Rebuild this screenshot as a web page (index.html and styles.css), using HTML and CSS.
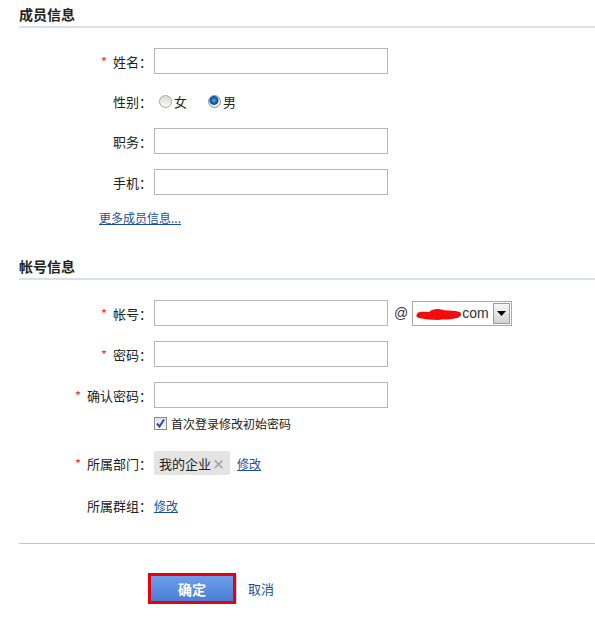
FILE: index.html
```html
<!DOCTYPE html>
<html lang="zh-CN">
<head>
    <meta charset="UTF-8">
    <meta name="viewport" content="width=device-width, initial-scale=1.0">
    <title>添加成员</title>
    <link rel="stylesheet" href="styles.css">
</head>
<body>

    <div class="page">
        <h2 class="section-title">成员信息</h2>
        <div class="fields">
            <div class="row">
                <label class="label"><span class="req">*</span>姓名：</label>
                <input class="text" type="text">
            </div>
            <div class="row row-radio">
                <label class="label">性别：</label>
                <label class="opt"><input class="radio" type="radio" name="sex">女</label>
                <label class="opt"><input class="radio" type="radio" name="sex" checked>男</label>
            </div>
            <div class="row">
                <label class="label">职务：</label>
                <input class="text" type="text">
            </div>
            <div class="row">
                <label class="label">手机：</label>
                <input class="text" type="text">
            </div>
            <a class="more" href="#">更多成员信息...</a>
        </div>

        <h2 class="section-title second">帐号信息</h2>
        <div class="fields">
            <div class="row">
                <label class="label"><span class="req">*</span>帐号：</label>
                <input class="text" type="text">
                <span class="at">@</span>
                <div class="domain">
                    <svg class="blot" width="46" height="14" viewBox="0 0 46 14">
                        <path d="M1 7 C2 4 8 5 13 5 C16 2 22 1 27 3 C32 4 38 3 44 5 C46 7 45 10 41 11 C35 13 28 12 22 13 C15 13 8 12 3 11 C0 10 0 9 1 7 Z" fill="#f20d0d"/>
                    </svg>
                    <span class="domain-text">com</span>
                    <span class="drop">
                        <svg width="9" height="5" viewBox="0 0 9 5"><path d="M0 0 H9 L4.5 5 Z" fill="#000"/></svg>
                    </span>
                </div>
            </div>
            <div class="row">
                <label class="label"><span class="req">*</span>密码：</label>
                <input class="text" type="password">
            </div>
            <div class="row row-pass">
                <label class="label"><span class="req">*</span>确认密码：</label>
                <input class="text" type="password">
            </div>
            <div class="row row-check">
                <span class="check">
                    <svg width="11" height="11" viewBox="0 0 11 11"><path d="M2 5.5 L4.5 8.5 L9 1.5" fill="none" stroke="#2d4fa8" stroke-width="2"/></svg>
                </span>
                首次登录修改初始密码
            </div>
            <div class="row row-dept">
                <label class="label"><span class="req">*</span>所属部门：</label>
                <span class="tag">我的企业<span class="tag-x">×</span></span>
                <a class="link edit" href="#">修改</a>
            </div>
            <div class="row row-group">
                <label class="label">所属群组：</label>
                <a class="link" href="#">修改</a>
            </div>
        </div>

        <div class="actions">
            <button class="btn-ok">确定</button>
            <a class="cancel" href="#">取消</a>
        </div>
    </div>

</body>
</html>
```

FILE: styles.css
```css
body {
    margin: 0;
    background-color: #fff;
    color: #222;
    font-family: "Noto Sans CJK SC", "Liberation Sans", sans-serif;
    font-size: 13px;
}
.page {
    padding-left: 19px;
}
.section-title {
    margin: 0;
    padding: 4px 0 2px;
    font-size: 14px;
    line-height: 20px;
    font-weight: bold;
    color: #222;
    border-bottom: 2px solid #d7e1eb;
}
.section-title.second {
    margin-top: 26px;
}
.fields {
    padding-top: 20px;
}
.row {
    display: flex;
    align-items: center;
    height: 26px;
    margin-bottom: 15px;
}
.label {
    width: 133px;
    margin-right: 2px;
    text-align: right;
    white-space: nowrap;
}
.req {
    color: #ee3344;
    margin-right: 6px;
}
.text {
    box-sizing: border-box;
    width: 234px;
    height: 26px;
    margin: 0;
    border: 1px solid #b7b7b7;
    padding: 2px 4px;
}
.row-radio {
    height: 24px;
}
.opt {
    display: flex;
    align-items: center;
    margin-right: 16px;
}
.radio {
    appearance: none;
    width: 13px;
    height: 13px;
    margin: 0 2px 0 5px;
    border: 1px solid #a4a4a4;
    border-radius: 50%;
    background: linear-gradient(#d9d9d9, #fafafa);
}
.radio:checked {
    background: radial-gradient(circle at 45% 40%, #5fc0f4 0, #1a76c2 2px, #0d4f8f 4px, #e8e8e8 5px, #f6f6f6 6px);
    border-color: #8a8a8a;
}
.more {
    display: block;
    margin-left: 80px;
    font-size: 12px;
    line-height: 16px;
    color: #1c4e9f;
}
.at {
    margin: 0 4px 0 6px;
    font-family: "Liberation Sans", sans-serif;
    font-size: 14px;
    color: #334;
}
.domain {
    box-sizing: border-box;
    display: flex;
    align-items: center;
    width: 100px;
    height: 25px;
    border: 1px solid #a9a9a9;
    padding: 0 1px 0 3px;
}
.blot {
    margin-top: 2px;
}
.domain-text {
    font-family: "Liberation Sans", sans-serif;
    font-size: 14px;
    color: #333;
    flex: 1;
}
.drop {
    box-sizing: border-box;
    display: flex;
    align-items: center;
    justify-content: center;
    width: 17px;
    height: 21px;
    border: 1px solid #9a9a9a;
    background: linear-gradient(#f6f6f6, #d3d3d3);
}
.row-pass {
    margin-bottom: 7px;
}
.row-check {
    height: 16px;
    margin-left: 135px;
    margin-bottom: 20px;
    font-size: 12px;
}
.check {
    box-sizing: border-box;
    display: flex;
    align-items: center;
    justify-content: center;
    width: 13px;
    height: 13px;
    margin-right: 4px;
    border: 1px solid #8c8c8c;
    background: linear-gradient(#e2e2e2, #fbfbfb);
}
.row-dept {
    height: 24px;
    margin-bottom: 18px;
}
.tag {
    display: flex;
    align-items: center;
    height: 24px;
    padding: 0 5px;
    background-color: #e4e4e4;
    border-radius: 2px;
    color: #222;
}
.tag-x {
    margin-left: 1px;
    font-weight: bold;
    color: #a0a0a0;
}
.link {
    color: #1c4e9f;
    font-size: 12px;
}
.edit {
    margin-left: 7px;
}
.row-group {
    height: 24px;
    margin-bottom: 0;
}
.actions {
    display: flex;
    align-items: center;
    margin-top: 26px;
    padding-top: 29px;
    border-top: 1px solid #c6c6c6;
}
.btn-ok {
    width: 88px;
    height: 31px;
    margin-left: 129px;
    border: 3px solid #e8000b;
    background: linear-gradient(#6f9eea, #4a7fd6);
    box-shadow: 1px 2px 0 #b7cdf0;
    color: #fff;
    font-family: "Noto Sans CJK SC", sans-serif;
    font-size: 14px;
    font-weight: bold;
    cursor: pointer;
}
.cancel {
    margin-left: 12px;
    color: #1c4e9f;
    font-size: 13px;
    text-decoration: none;
}
```
